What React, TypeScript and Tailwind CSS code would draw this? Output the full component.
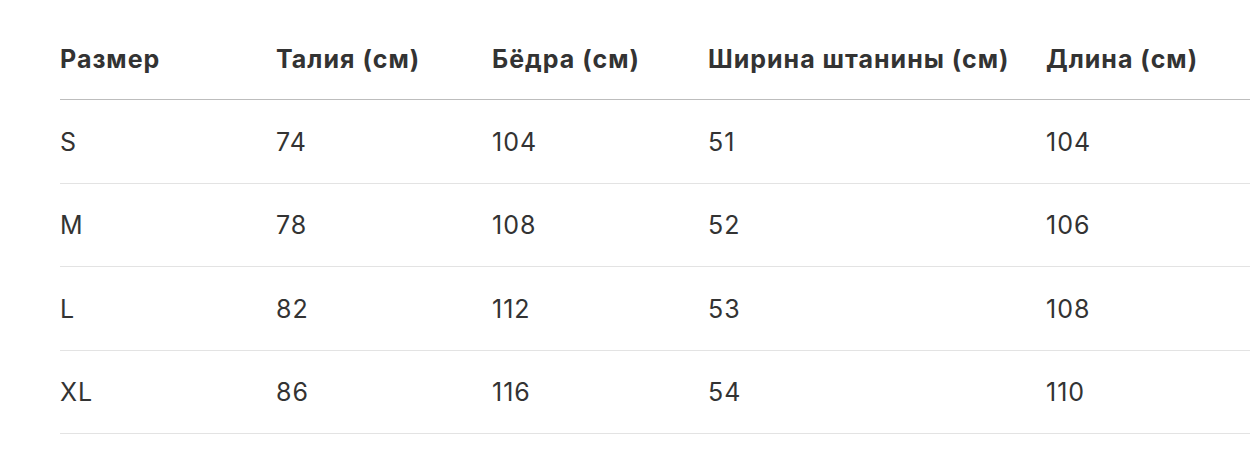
import React from "react";

const headers = ["Размер", "Талия (см)", "Бёдра (см)", "Ширина штанины (см)", "Длина (см)"];
const rows = [
  ["S", "74", "104", "51", "104"],
  ["M", "78", "108", "52", "106"],
  ["L", "82", "112", "53", "108"],
  ["XL", "86", "116", "54", "110"],
];

export default function App() {
  return (
    <div className="bg-white w-[1250px] h-[464px] pl-[60px] pt-[21px] text-[#333333]" style={{ fontFamily: 'Inter, "Liberation Sans", Arial, sans-serif' }}>
      <div className="grid grid-cols-[216px_216px_216px_338px_1fr] h-[79px] items-center border-b border-[#bdbdbd] text-[25px] tracking-[1px] font-bold">
        {headers.map((h) => (
          <div key={h} className="whitespace-nowrap">{h}</div>
        ))}
      </div>
      {rows.map((r) => (
        <div key={r[0]} className="grid grid-cols-[216px_216px_216px_338px_1fr] h-[83.5px] pt-[2px] items-center border-b border-[#e3e3e3] text-[25px] tracking-[1px]">
          {r.map((c, i) => (
            <div key={i}>{c}</div>
          ))}
        </div>
      ))}
    </div>
  );
}
